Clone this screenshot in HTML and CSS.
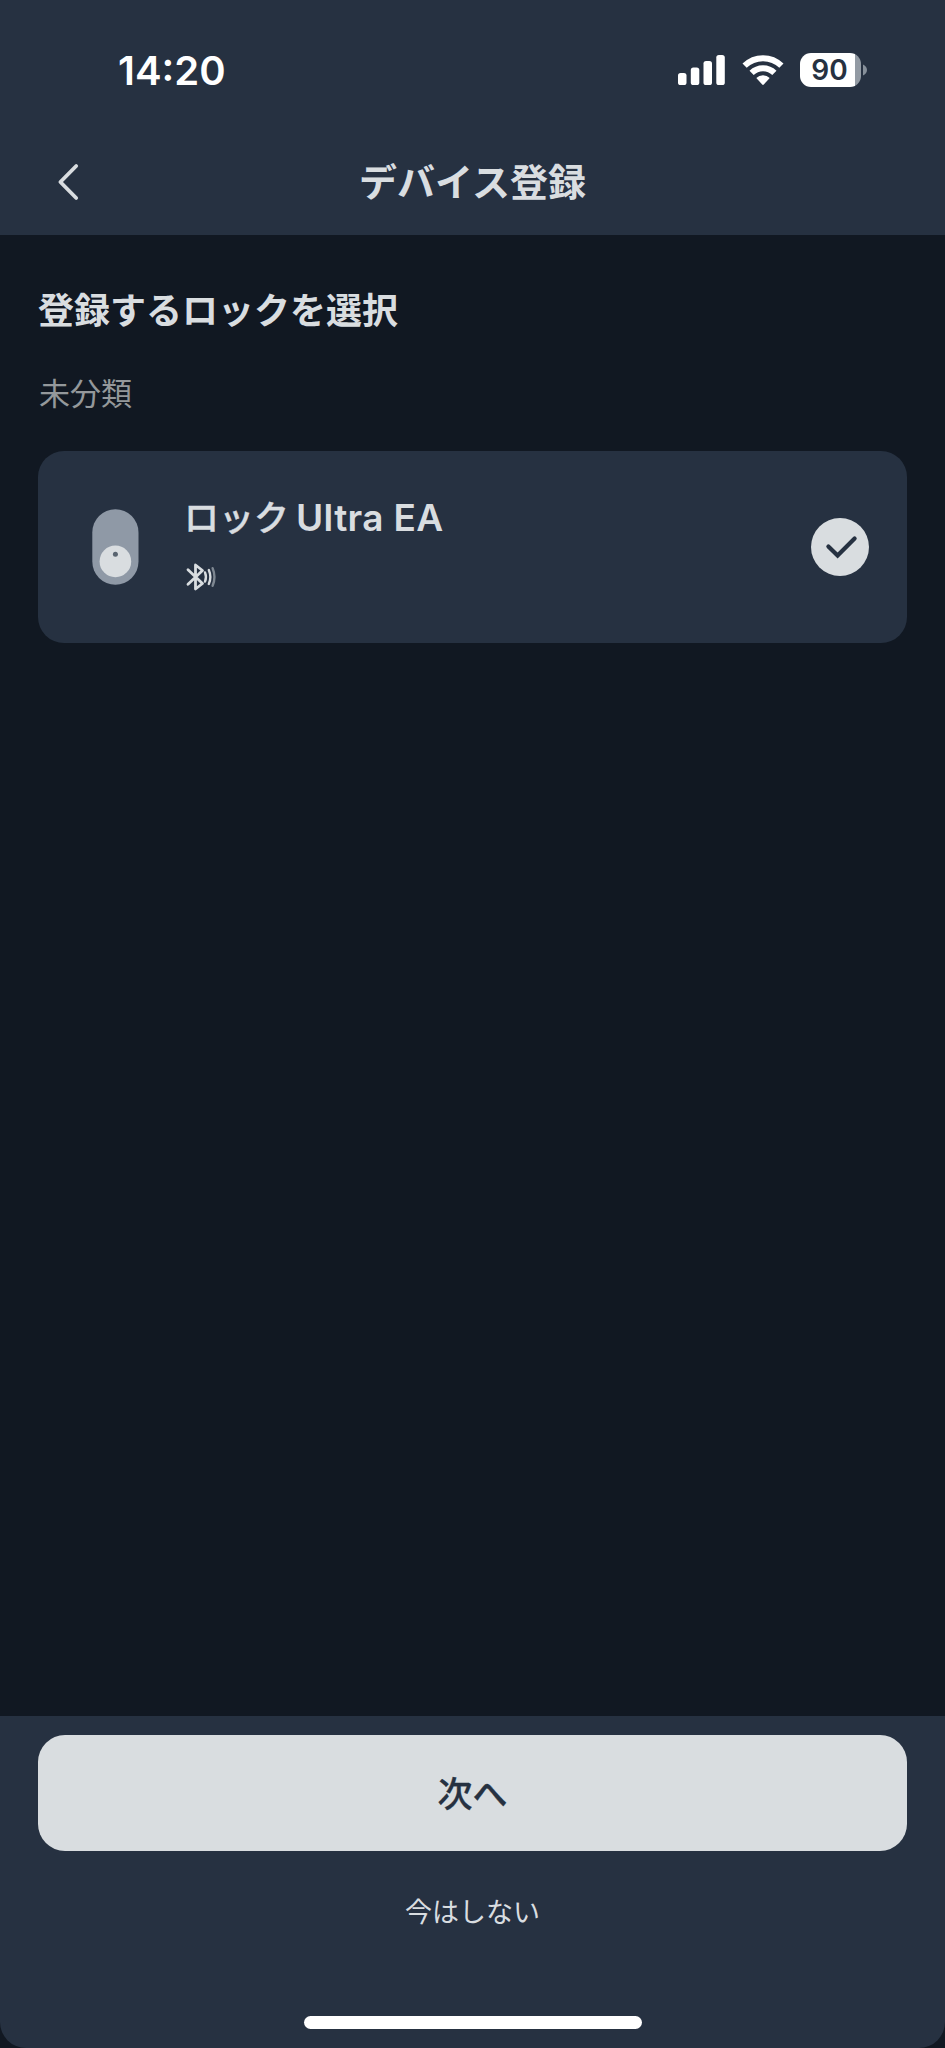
FILE: index.html
```html
<!DOCTYPE html>
<html lang="ja">
<head>
  <meta charset="UTF-8" />
  <meta name="viewport" content="width=device-width, initial-scale=1" />
  <title>デバイス登録</title>
  <link rel="stylesheet" href="styles.css">
</head>
<body>

<div class="screen">
  <header>
    <div class="status-bar">
      <span class="time">14:20</span>
      <div class="status-icons">
        <svg class="signal" width="48" height="32" viewBox="0 0 48 32" fill="#fff">
          <rect x="0" y="19" width="8.5" height="12" rx="2.6" />
          <rect x="12.8" y="13.5" width="8.5" height="17.5" rx="2.6" />
          <rect x="25.5" y="7" width="8.5" height="24" rx="2.6" />
          <rect x="38.3" y="1" width="8.5" height="30" rx="2.6" />
        </svg>
        <svg class="wifi" width="42" height="32" viewBox="0 0 42 32">
          <g fill="none" stroke="#fff" stroke-width="6">
            <path d="M2.6 11.7a26.3 26.3 0 0 1 36.8 0" />
            <path d="M9.6 18.9a16.3 16.3 0 0 1 22.8 0" />
          </g>
          <path fill="#fff" d="M14.3 24.1a9.5 9.5 0 0 1 13.4 0l-5.9 6.4a1.1 1.1 0 0 1-1.6 0z" />
        </svg>
        <div class="battery">
          <span class="battery-level">90</span>
          <svg class="battery-tip" width="4" height="12" viewBox="0 0 4 12">
            <path fill="#87909a" d="M0 0.5c2.4 1 4 3 4 5.5s-1.6 4.5-4 5.5z" />
          </svg>
        </div>
      </div>
    </div>
    <nav class="nav-bar">
      <button class="btn-back" aria-label="戻る">
        <svg width="22" height="38" viewBox="0 0 22 38">
          <path d="M19.2 3 3.4 19l15.8 16" fill="none" stroke="#d9dde0" stroke-width="3.8" stroke-linecap="round" stroke-linejoin="round" />
        </svg>
      </button>
      <h1>デバイス登録</h1>
    </nav>
  </header>

  <main>
    <h2>登録するロックを選択</h2>
    <p class="group-name">未分類</p>

    <div class="device-card">
      <svg class="lock-icon" width="47" height="76" viewBox="0 0 47 76">
        <rect x="0.3" y="0.3" width="46.2" height="75.4" rx="23.1" fill="#8f99a6" />
        <circle cx="23.4" cy="52.4" r="15.8" fill="#d9dde0" />
        <circle cx="23.4" cy="45.3" r="2.5" fill="#596470" />
      </svg>
      <div class="device-info">
        <h3>ロック<span class="latin">Ultra EA</span></h3>
        <svg class="bluetooth" width="32" height="28" viewBox="0 0 32 28" fill="none" stroke="#d9dde0" stroke-linecap="round" stroke-linejoin="round">
          <path stroke-width="2.8" d="M2 6.8 16.5 20.5 9.5 26V2L16.5 7.5 2 21.2" />
          <path stroke-width="2.4" d="M19 9.4c1.2 3 1.2 6.2 0 9.2" />
          <path stroke-width="2.4" d="M22.8 7c2 4.5 2 9.5 0 14" />
          <path stroke-width="2.4" stroke="#7e8791" d="M26.6 5.2c2.4 5.7 2.4 11.9 0 17.6" />
        </svg>
      </div>
      <svg class="check" width="58" height="58" viewBox="0 0 58 58">
        <circle cx="29" cy="29" r="29" fill="#d9dde0" />
        <path d="M17.4 28.4 26.6 37.6 43.6 20.4" fill="none" stroke="#263141" stroke-width="4.2" stroke-linecap="round" stroke-linejoin="miter" />
      </svg>
    </div>
  </main>

  <footer>
    <button class="btn-next">次へ</button>
    <button class="btn-later">今はしない</button>
    <div class="home-indicator"></div>
  </footer>
</div>

</body>
</html>
```
FILE: styles.css
```css
:root {
  --dark: #111822;
  --panel: #263141;
  --text: #d9dde0;
  --text-muted: #94989b;
}

* {
  box-sizing: border-box;
}

body {
  margin: 0;
  font-family: 'Noto Sans CJK JP', sans-serif;
  background-color: var(--dark);
  color: var(--text);
}

h1, h2, h3, p {
  margin: 0;
}

button {
  padding: 0;
  border: none;
  background: none;
  font-family: inherit;
  color: inherit;
  cursor: pointer;
}

svg {
  display: block;
  flex-shrink: 0;
}

.screen {
  display: flex;
  flex-direction: column;
  height: 2048px;
}

header {
  height: 235px;
  background-color: var(--panel);
}

/* Status bar */
.status-bar {
  display: flex;
  align-items: center;
  justify-content: space-between;
  height: 140px;
  padding: 0 78px 0 118px;
  color: #fff;
}

.time {
  padding-top: 1px;
  font-family: Inter, sans-serif;
  font-size: 40px;
  font-weight: 600;
  line-height: 48px;
}

.status-icons {
  display: flex;
  align-items: center;
}

.wifi {
  margin-left: 16px;
}

.battery {
  display: flex;
  align-items: center;
  gap: 2px;
  margin-left: 16px;
}

.battery-level {
  width: 61px;
  height: 34px;
  border-radius: 11px;
  padding-right: 2px;
  background: linear-gradient(to right, #fff 55px, #929aa3 55px);
  color: var(--panel);
  font-family: Inter, sans-serif;
  font-size: 28px;
  font-weight: 600;
  line-height: 34px;
  text-align: center;
}

/* Title row */
.nav-bar {
  display: grid;
  grid-template-columns: 80px 1fr 80px;
  align-items: center;
  height: 84px;
}

.btn-back {
  padding-left: 57px;
}

.nav-bar h1 {
  padding-bottom: 4px;
  font-size: 38px;
  font-weight: 700;
  line-height: 56px;
  text-align: center;
}

/* Lock list */
main {
  flex: 1;
  padding: 46px 38px 0;
}

main h2 {
  font-size: 36px;
  font-weight: 700;
  line-height: 54px;
}

.group-name {
  margin-top: 34px;
  padding-left: 1px;
  color: var(--text-muted);
  font-size: 31px;
  line-height: 46px;
}

.device-card {
  display: flex;
  align-items: center;
  height: 192px;
  margin-top: 36px;
  padding: 0 38px 0 54px;
  border-radius: 26px;
  background-color: var(--panel);
}

.device-info {
  flex: 1;
  margin-left: 45px;
  padding-bottom: 14px;
}

.device-info h3 {
  font-size: 35px;
  font-weight: 500;
  line-height: 54px;
  -webkit-text-stroke: 0.4px currentColor;
}

.latin {
  margin-left: 7px;
  font-family: Inter, sans-serif;
  font-size: 37px;
  font-weight: 600;
  letter-spacing: 0.35px;
  -webkit-text-stroke: 0;
}

.bluetooth {
  margin-top: 18px;
  margin-left: 2px;
}

/* Bottom actions */
footer {
  display: flex;
  flex-direction: column;
  align-items: center;
  height: 332px;
  padding: 19px 38px;
  border-radius: 0 0 26px 26px;
  background-color: var(--panel);
}

.btn-next {
  width: 100%;
  height: 116px;
  padding-bottom: 4px;
  border-radius: 27px;
  background-color: var(--text);
  color: var(--panel);
  font-size: 35px;
  font-weight: 500;
  -webkit-text-stroke: 0.3px currentColor;
}

.btn-later {
  margin-top: 40px;
  font-size: 27px;
  line-height: 40px;
}

.home-indicator {
  width: 338px;
  height: 13px;
  margin-top: auto;
  border-radius: 7px;
  background-color: #fff;
}
```
